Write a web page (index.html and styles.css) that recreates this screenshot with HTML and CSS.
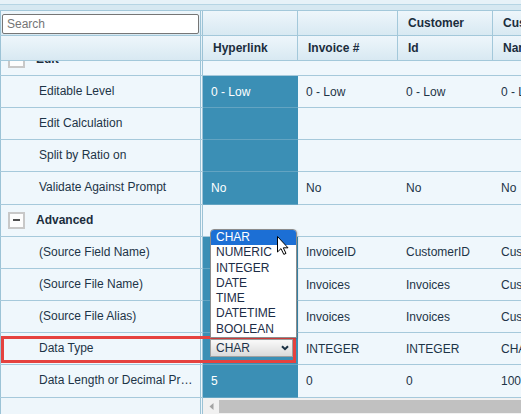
FILE: index.html
```html
<!DOCTYPE html>
<html>
<head>
<meta charset="utf-8">
<link rel="stylesheet" href="styles.css">
</head>
<body>
<div class="page">
  <div class="top1"></div>
  <div class="top2"></div>

  <div class="hrow">
    <div class="lc"><input class="search" placeholder="Search"></div>
    <div class="gap"></div>
    <div class="hc w95"></div>
    <div class="hc w100"></div>
    <div class="hc w95">Customer</div>
    <div class="hc w100">Customer</div>
  </div>
  <div class="hrow">
    <div class="lc"></div>
    <div class="gap"></div>
    <div class="hc w95">Hyperlink</div>
    <div class="hc w100">Invoice #</div>
    <div class="hc w95">Id</div>
    <div class="hc w100">Name</div>
  </div>

  <div class="body">
    <div class="row first">
      <div class="lc grp"><span class="box"></span>Edit</div>
      <div class="gap"></div>
      <div class="gspan"></div>
    </div>
    <div class="row">
      <div class="lc txt">Editable Level</div>
      <div class="gap"></div>
      <div class="c w95 fill">0 - Low</div>
      <div class="c w100">0 - Low</div>
      <div class="c w95">0 - Low</div>
      <div class="c w100">0 - Low</div>
    </div>
    <div class="row">
      <div class="lc txt">Edit Calculation</div>
      <div class="gap"></div>
      <div class="c w95 fill"></div>
      <div class="c w100"></div>
      <div class="c w95"></div>
      <div class="c w100"></div>
    </div>
    <div class="row">
      <div class="lc txt">Split by Ratio on</div>
      <div class="gap"></div>
      <div class="c w95 fill"></div>
      <div class="c w100"></div>
      <div class="c w95"></div>
      <div class="c w100"></div>
    </div>
    <div class="row">
      <div class="lc txt">Validate Against Prompt</div>
      <div class="gap"></div>
      <div class="c w95 fill">No</div>
      <div class="c w100">No</div>
      <div class="c w95">No</div>
      <div class="c w100">No</div>
    </div>
    <div class="row">
      <div class="lc grp"><span class="box"></span>Advanced</div>
      <div class="gap"></div>
      <div class="gspan"></div>
    </div>
    <div class="row">
      <div class="lc txt">(Source Field Name)</div>
      <div class="gap"></div>
      <div class="c w95 fill"></div>
      <div class="c w100">InvoiceID</div>
      <div class="c w95">CustomerID</div>
      <div class="c w100">CustomerName</div>
    </div>
    <div class="row">
      <div class="lc txt">(Source File Name)</div>
      <div class="gap"></div>
      <div class="c w95 fill"></div>
      <div class="c w100">Invoices</div>
      <div class="c w95">Invoices</div>
      <div class="c w100">Customers</div>
    </div>
    <div class="row">
      <div class="lc txt">(Source File Alias)</div>
      <div class="gap"></div>
      <div class="c w95 fill"></div>
      <div class="c w100">Invoices</div>
      <div class="c w95">Invoices</div>
      <div class="c w100">Customers</div>
    </div>
    <div class="row">
      <div class="lc txt">Data Type</div>
      <div class="gap"></div>
      <div class="c w95 fill selcell">
        <div class="select"><span>CHAR</span>
          <svg class="chev" width="8" height="6" viewBox="0 0 8 6"><path d="M1 1.2 L4 4.2 L7 1.2" fill="none" stroke="#1b3143" stroke-width="2"/></svg>
        </div>
      </div>
      <div class="c w100">INTEGER</div>
      <div class="c w95">INTEGER</div>
      <div class="c w100">CHAR</div>
    </div>
    <div class="row">
      <div class="lc txt">Data Length or Decimal Precision</div>
      <div class="gap"></div>
      <div class="c w95 fill">5</div>
      <div class="c w100">0</div>
      <div class="c w95">0</div>
      <div class="c w100">100</div>
    </div>
  </div>

  <div class="hs">
    <div class="lc"></div>
    <div class="gap"></div>
    <div class="track">
      <div class="arrow"><svg width="5" height="7" viewBox="0 0 5 7"><path d="M4.5 0 L0.5 3.5 L4.5 7 Z" fill="#a3a3a3"/></svg></div>
      <div class="thumb"></div>
    </div>
  </div>

  <div class="redbox"></div>

  <div class="dropdown">
    <div class="opt on">CHAR</div>
    <div class="opt">NUMERIC</div>
    <div class="opt">INTEGER</div>
    <div class="opt">DATE</div>
    <div class="opt">TIME</div>
    <div class="opt">DATETIME</div>
    <div class="opt">BOOLEAN</div>
  </div>

  <svg class="cursor" width="14" height="21" viewBox="0 0 14 21">
    <path d="M1.5 1.5 L1.5 17 L5 13.6 L7.8 19.4 L10 18.4 L7.3 12.8 L12 12.8 Z" fill="#fff" stroke="#000" stroke-width="1" stroke-linejoin="miter"/>
  </svg>
</div>
</body>
</html>
```

FILE: styles.css
```css
body {
  margin: 0;
  background: #eef6fb;
  font-family: "Liberation Sans", Arial, sans-serif;
  font-size: 12px;
  color: #1d3447;
}

.page {
  position: relative;
  width: 521px;
  height: 414px;
  overflow: hidden;
  background: #eef6fb;
}

.top1 {
  height: 4px;
  background: #e7f2f8;
  border-bottom: 1px solid #b6d5e4;
}

.top2 {
  height: 5px;
  background: #d6e8f1;
  border-bottom: 1px solid #a3c8da;
}

/* header rows */
.hrow {
  display: flex;
  height: 25px;
  box-sizing: border-box;
  border-bottom: 1px solid #a3c8da;
  background: linear-gradient(#eef6fb, #d8e9f2);
}

.lc {
  flex: none;
  width: 201px;
  box-sizing: border-box;
  border-left: 1px solid #9cc3d6;
  border-right: 1px solid #9cc3d6;
  display: flex;
  align-items: center;
}

.gap {
  flex: none;
  width: 2px;
  box-sizing: border-box;
  border-right: 1px solid #9cc3d6;
}

.hc {
  flex: none;
  box-sizing: border-box;
  border-right: 1px solid #a3c8da;
  padding-left: 10px;
  display: flex;
  align-items: center;
  white-space: nowrap;
  overflow: hidden;
  font-weight: bold;
  color: #1b2d3d;
}

.w95 { width: 95px; }
.w100 { width: 100px; }

.search {
  box-sizing: border-box;
  width: 197px;
  height: 20px;
  margin: 2px 0 0 1px;
  padding: 0 4px;
  border: 1px solid #767676;
  border-radius: 2px;
  background: #fff;
  font-family: "Liberation Sans", Arial, sans-serif;
  font-size: 12px;
  color: #222;
  outline: none;
}

.search::placeholder {
  color: #757575;
}

/* body */
.body {
  height: 337px;
  overflow: hidden;
}

.row {
  display: flex;
  height: 32.17px;
  box-sizing: border-box;
  border-bottom: 1px solid #a6c9db;
  background: #eff7fc;
}

.row.first {
  margin-top: -17.17px;
}

.lc.txt {
  display: block;
  padding-left: 38px;
  padding-right: 6px;
  line-height: 31.17px;
  white-space: nowrap;
  overflow: hidden;
  text-overflow: ellipsis;
}

.lc.grp {
  padding-left: 7px;
  font-weight: bold;
  color: #1b2d3d;
}

.box {
  position: relative;
  flex: none;
  width: 17px;
  height: 17px;
  box-sizing: border-box;
  margin-right: 11px;
  border: 2px solid #c8c8c8;
  background: #fdfdfd;
}

.box::after {
  content: "";
  position: absolute;
  left: 3px;
  top: 5.5px;
  width: 7px;
  height: 2px;
  background: #4f4f4f;
}

.gspan {
  flex: 1;
}

.c {
  flex: none;
  box-sizing: border-box;
  padding-left: 8px;
  display: flex;
  align-items: center;
  white-space: nowrap;
  overflow: hidden;
}

.fill {
  background: #3b8fb5;
  color: #fff;
  margin-bottom: -1px;
  border-bottom: 1px solid #63a4c2;
}

.selcell {
  padding-left: 7px;
}

.select {
  box-sizing: border-box;
  width: 83px;
  height: 18px;
  margin-bottom: 2px;
  padding: 0 3px 0 5px;
  border: 1px solid #a0a0a0;
  background: linear-gradient(#fafafa, #dadada);
  display: flex;
  align-items: center;
  justify-content: space-between;
  color: #1d3349;
}

.chev {
  display: block;
}

/* horizontal scrollbar */
.hs {
  display: flex;
  height: 17px;
}

.track {
  flex: 1;
  display: flex;
  background: #f1f1f1;
}

.arrow {
  flex: none;
  width: 16px;
  display: flex;
  align-items: center;
  justify-content: center;
}

.thumb {
  flex: 1;
  margin: 2px 0;
  background: #c1c1c1;
}

/* overlays */
.redbox {
  position: absolute;
  left: 1px;
  top: 336px;
  width: 295px;
  height: 27px;
  box-sizing: border-box;
  border: 3px solid #e5423f;
  z-index: 2;
}

.dropdown {
  position: absolute;
  left: 210px;
  top: 229px;
  width: 87px;
  box-sizing: border-box;
  border: 1px solid #8c8c8c;
  border-radius: 4px 4px 0 0;
  background: #fff;
  box-shadow: 1px 1px 2px rgba(0, 0, 0, 0.15);
  z-index: 3;
}

.opt {
  padding-left: 5px;
  line-height: 15.3px;
  color: #1c2c46;
  white-space: nowrap;
}

.opt.on {
  background: #1c6fd5;
  color: #fff;
  border-radius: 3px 3px 0 0;
}

.cursor {
  position: absolute;
  left: 276px;
  top: 235px;
  z-index: 4;
}
```
